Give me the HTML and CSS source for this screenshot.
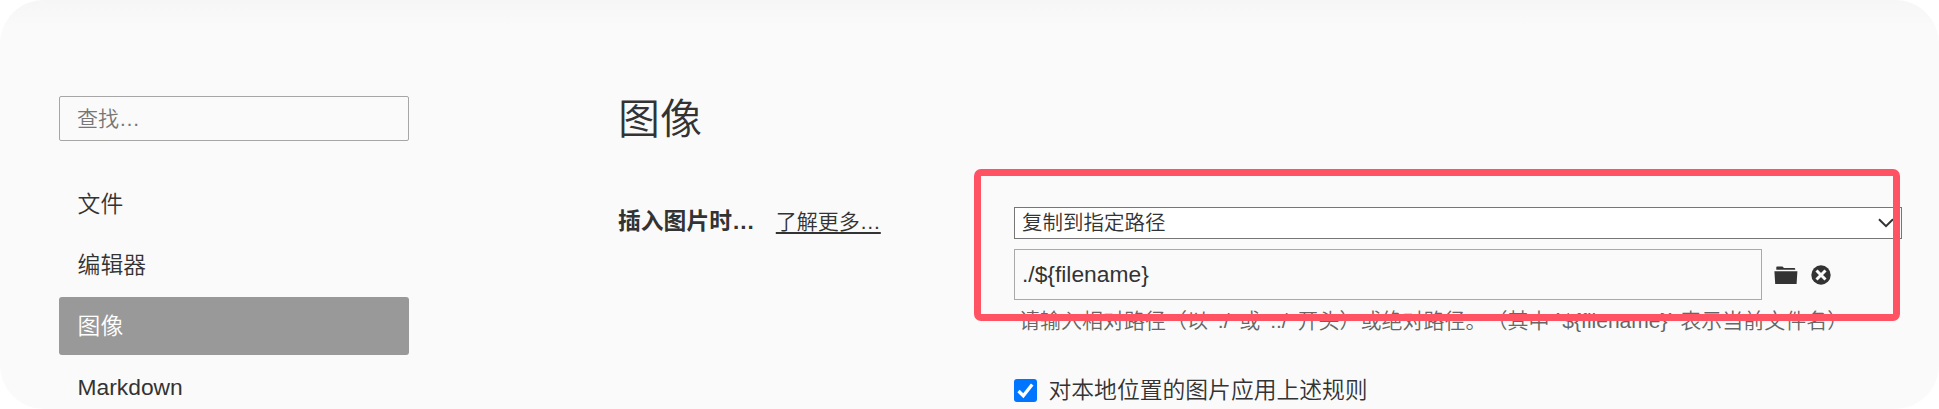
FILE: index.html
```html
<!DOCTYPE html>
<html lang="zh-CN">
<head>
<meta charset="utf-8">
<title>图像</title>
<link rel="stylesheet" href="styles.css">
</head>
<body>
<div class="window">
  <aside class="sidebar">
    <div class="search">查找…</div>
    <nav class="nav">
      <a class="nav-item">文件</a>
      <a class="nav-item">编辑器</a>
      <a class="nav-item active">图像</a>
      <a class="nav-item">Markdown</a>
    </nav>
  </aside>
  <main class="content">
    <h1 class="title">图像</h1>
    <div class="row">
      <div class="label"><b>插入图片时…</b><a class="more">了解更多…</a></div>
      <div class="controls">
        <div class="select"><span class="t">复制到指定路径</span>
          <svg class="chevron" width="16" height="10" viewBox="0 0 16 10"><path d="M1 1.2 8 8.2 15 1.2" fill="none" stroke="#333" stroke-width="2"/></svg>
        </div>
        <div class="path-row">
          <div class="path"><span class="t">./${filename}</span></div>
          <svg class="folder" width="24" height="18" viewBox="0 0 24 18"><path d="M2.3 3.7V1.2Q2.3.4 3.1.4H8.5L10 2.1H20.4Q21.2 2.1 21.2 2.9V3.7ZM.4 5.2H23.4L22.6 18H1.2Z" fill="#333"/></svg>
          <svg class="remove" width="20" height="20" viewBox="0 0 20 20"><circle cx="10" cy="10" r="9.7" fill="#333"/><path d="M5.5 5.5 14.5 14.5M14.5 5.5 5.5 14.5" stroke="#fafafa" stroke-width="3"/></svg>
        </div>
        <div class="hint">请输入相对路径（以 './' 或 '../' 开头）或绝对路径。（其中 `${filename}` 表示当前文件名）</div>
        <div class="check">
          <svg width="23" height="23" viewBox="0 0 23 23"><rect width="23" height="23" rx="3" fill="#0075ff"/><path d="M4.5 12 9.3 16.7 18.2 5.4" fill="none" stroke="#fff" stroke-width="3.3"/></svg>
          <span class="t">对本地位置的图片应用上述规则</span>
        </div>
      </div>
    </div>
  </main>
  <div class="highlight"></div>
</div>
</body>
</html>
```
FILE: styles.css
```css
* { box-sizing: border-box; }
body { margin: 0; background: #fff; }
.window {
  position: relative;
  display: flex;
  width: 1939px;
  height: 409px;
  padding-left: 59px;
  overflow: hidden;
  border-radius: 44px;
  background: linear-gradient(#f6f6f6 0, #f8f8f8 14px, #fafafa 26px);
  color: #333;
  font: 350 22.8px/30px "Liberation Sans", "Noto Sans CJK SC", sans-serif;
  text-spacing-trim: space-all;
  white-space: nowrap;
}
.sidebar { width: 350px; padding-top: 96px; flex: none; }
.search {
  height: 45px;
  padding-left: 17px;
  border: 1px solid #a6a6a6;
  border-radius: 2px;
  color: #777;
  font-size: 21px;
  line-height: 43px;
}
.nav { display: flex; flex-direction: column; gap: 3px; margin-top: 34px; }
.nav-item { height: 58px; padding-left: 18.6px; border-radius: 3px; line-height: 58px; }
.active { background: #999; color: #fff; }
.content { margin-left: 209px; padding-top: 90px; }
.title { margin: 0; height: 60px; font-size: 42px; line-height: 60px; font-weight: 350; }
.row { display: flex; }
.label { width: 396px; padding-top: 56px; }
.label b { font-weight: 700; }
.more { margin-left: 21px; font-size: 21px; text-decoration: underline; text-decoration-thickness: 2px; text-underline-offset: 3px; }
.controls { width: 888px; padding-top: 57px; }
.select {
  display: flex;
  justify-content: space-between;
  align-items: center;
  height: 32px;
  padding: 0 7px 0 7px;
  border: 1px solid #767676;
  background: #fff;
  font-size: 20.5px;
}
.path-row { display: flex; align-items: center; margin-top: 10px; }
.path { width: 748px; height: 51px; padding-left: 7px; border: 1px solid #a9a9a9; line-height: 49px; }
.folder { margin-left: 12px; }
.remove { margin-left: 13px; }
.hint { margin-top: 6px; padding-left: 5px; color: #666; font-size: 21px; }
.check { display: flex; align-items: center; gap: 11.5px; margin-top: 39px; }
.highlight {
  position: absolute;
  left: 974px;
  top: 169px;
  width: 926px;
  height: 152px;
  border: 7px solid #ff5263;
  border-radius: 7px;
}
```
